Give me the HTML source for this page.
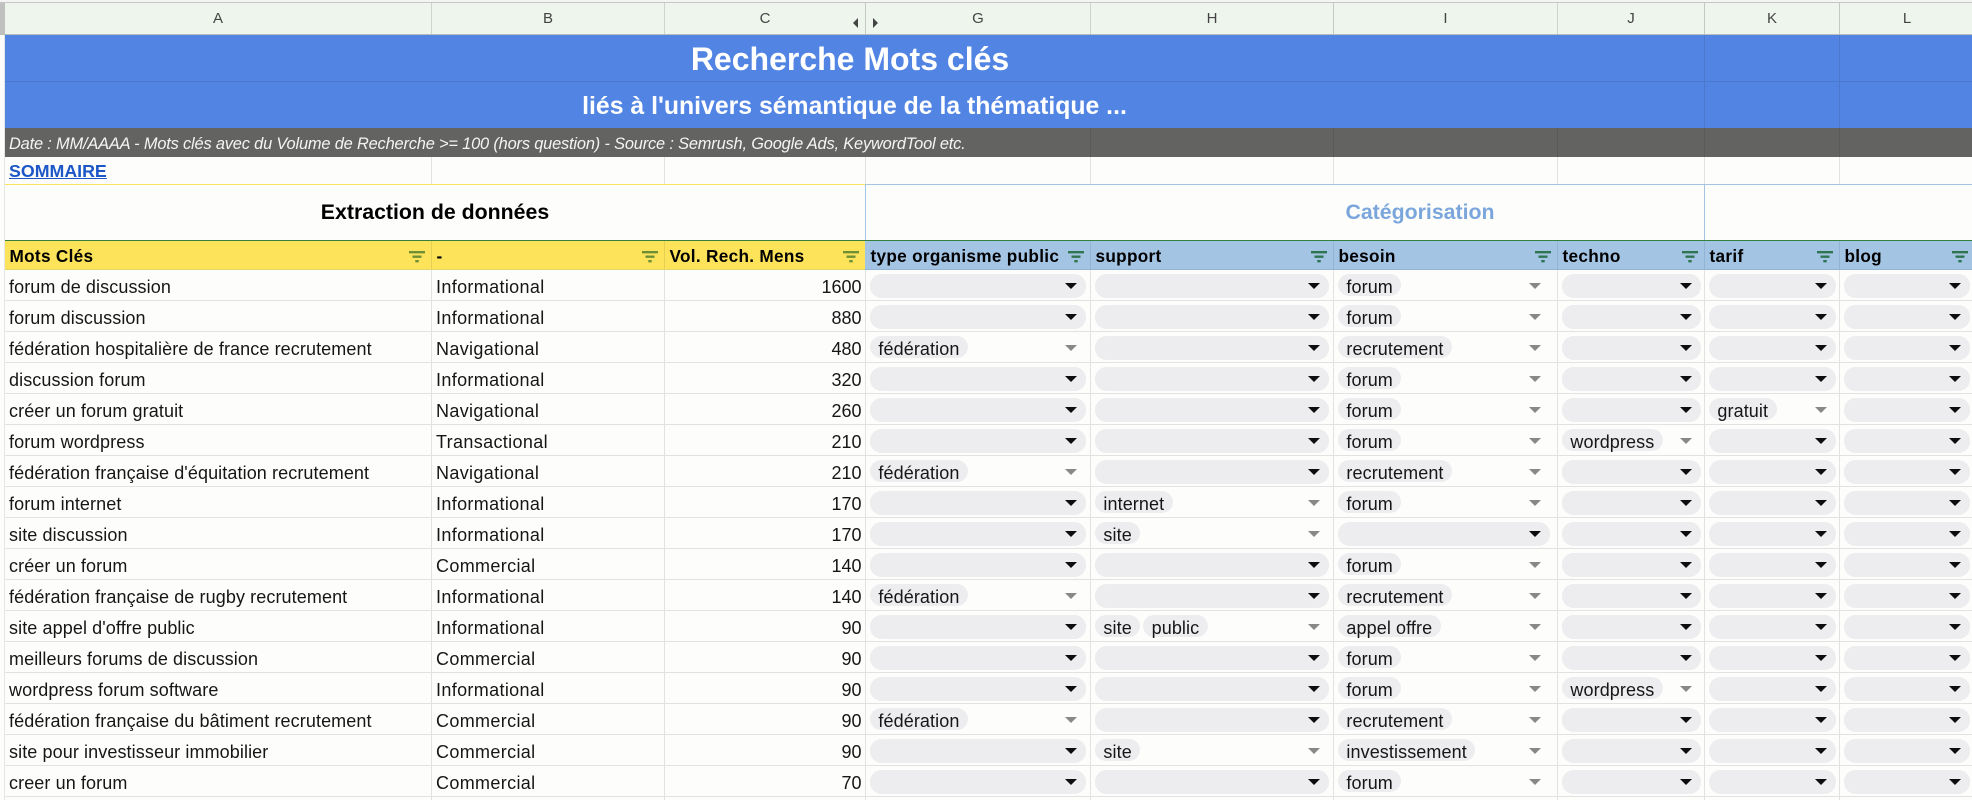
<!DOCTYPE html>
<html lang="fr"><head><meta charset="utf-8"><title>Recherche Mots clés</title>
<style>
html,body{margin:0;padding:0;background:#fdfefc}
#s{position:relative;width:1972px;height:800px;overflow:hidden;background:#fdfefc;font-family:"Liberation Sans",Arial,sans-serif;color:#111}
#s>div{position:absolute}
.v{width:1px}
.ch{top:3px;height:31px;line-height:31px;text-align:center;font-size:15px;color:#444;background:#edf5ed}
.bar{left:5px;width:1967px}
.ctr{white-space:nowrap;font-weight:bold;text-align:center;transform:translateX(-50%)}
.hd{top:241px;height:28px;line-height:30px;font-weight:bold;font-size:17.2px;letter-spacing:.3px;padding-left:4.5px;box-sizing:border-box;color:#000;white-space:nowrap}
.y{background:#fce35a}.bl{background:#a4c4e4}
.f{position:absolute;top:250.5px;width:16px;height:12px}
.r{left:5px;width:1967px;height:31px;border-bottom:1px solid #e2e2e2;box-sizing:border-box;font-size:18px;letter-spacing:.1px;color:#161616}
.r>*{position:absolute}
.r>b{font-weight:normal;top:1px;line-height:32px;white-space:nowrap}
.r>.a{left:4px}.r>.b{left:431px;letter-spacing:.35px}.r>.c{right:1110.5px;letter-spacing:0}
.d{top:4px;height:23.5px;border-radius:11.5px;display:block}
.e{background:#edecef}
.d::after{content:"";position:absolute;right:9px;top:8.5px;border-left:6px solid transparent;border-right:6px solid transparent;border-top:6.5px solid #888}
.e::after{border-top-color:#0d0d0d}
.d u{text-decoration:none;display:inline-block;height:22px;line-height:26px;border-radius:11px;background:#edecef;padding:0 8.4px;margin-right:3px;color:#161616;vertical-align:top}
.g{left:865px;width:216px}.h{left:1090px;width:234px}.i{left:1333px;width:212px}.j{left:1557px;width:138.5px}.k{left:1704px;width:127px}.l{left:1839px;width:126px}
</style></head><body><div id="s">
<div style="left:0;top:0;width:1972px;height:2px;background:#f4f4f4"></div>
<div style="left:0;top:2px;width:1972px;height:1px;background:#c6c6c6"></div>
<div style="left:0;top:3px;width:5px;height:32px;background:#c0c0c0"></div>
<div class="ch" style="left:5px;width:426px">A</div>
<div class="ch" style="left:432px;width:232px">B</div>
<div class="ch" style="left:665px;width:200px">C</div>
<div class="ch" style="left:866px;width:224px">G</div>
<div class="ch" style="left:1091px;width:242px">H</div>
<div class="ch" style="left:1334px;width:223px">I</div>
<div class="ch" style="left:1558px;width:146px">J</div>
<div class="ch" style="left:1705px;width:134px">K</div>
<div class="ch" style="left:1840px;width:134px">L</div>
<div class="v" style="left:431px;top:3px;height:31px;background:#ccd4cc"></div>
<div class="v" style="left:664px;top:3px;height:31px;background:#ccd4cc"></div>
<div class="v" style="left:865px;top:3px;height:31px;background:#c4c8c4"></div>
<div class="v" style="left:1090px;top:3px;height:31px;background:#ccd4cc"></div>
<div class="v" style="left:1333px;top:3px;height:31px;background:#c4c8c4"></div>
<div class="v" style="left:1557px;top:3px;height:31px;background:#ccd4cc"></div>
<div class="v" style="left:1704px;top:3px;height:31px;background:#c4c8c4"></div>
<div class="v" style="left:1839px;top:3px;height:31px;background:#c4c8c4"></div>
<div style="left:853px;top:18px;border-right:5px solid #444;border-top:5px solid transparent;border-bottom:5px solid transparent"></div>
<div style="left:873px;top:18px;border-left:5px solid #444;border-top:5px solid transparent;border-bottom:5px solid transparent"></div>
<div style="left:0;top:34px;width:1972px;height:1px;background:#b9bdb9"></div>

<div class="bar" style="top:35px;height:93px;background:#5285e3"></div>
<div class="bar" style="top:81px;height:1px;background:#4a78cc"></div>
<div class="bar" style="top:128px;height:29px;background:#636461"></div>
<div class="v" style="left:1704px;top:35px;height:93px;background:#4a78cc"></div>
<div class="v" style="left:1839px;top:35px;height:93px;background:#4a78cc"></div>
<div class="ctr" style="left:850px;top:41px;line-height:37px;font-size:32px;color:#fff">Recherche Mots clés</div>
<div class="ctr" style="left:854.5px;top:88px;line-height:37px;font-size:24.8px;color:#fff">liés à l'univers sémantique de la thématique ...</div>
<div style="left:9px;top:130px;line-height:29px;font-size:16.4px;font-style:italic;color:#f4f4f4;white-space:nowrap;letter-spacing:-.176px">Date : MM/AAAA - Mots clés avec du Volume de Recherche &gt;= 100 (hors question) - Source : Semrush, Google Ads, KeywordTool etc.</div>
<div class="v" style="left:1090px;top:128px;height:29px;background:#5a5b58"></div>
<div class="v" style="left:1333px;top:128px;height:29px;background:#5a5b58"></div>
<div class="v" style="left:1557px;top:128px;height:29px;background:#5a5b58"></div>
<div class="v" style="left:1704px;top:128px;height:29px;background:#5a5b58"></div>
<div class="v" style="left:1839px;top:128px;height:29px;background:#5a5b58"></div>

<div style="left:9px;top:157.5px;line-height:27px;font-size:17.8px;font-weight:bold;color:#1c56c7;text-decoration:underline">SOMMAIRE</div>
<div class="v" style="left:431px;top:157px;height:27px;background:#e2e2e2"></div>
<div class="v" style="left:664px;top:157px;height:27px;background:#e2e2e2"></div>
<div class="v" style="left:865px;top:157px;height:27px;background:#e2e2e2"></div>
<div class="v" style="left:1090px;top:157px;height:27px;background:#e2e2e2"></div>
<div class="v" style="left:1333px;top:157px;height:27px;background:#e2e2e2"></div>
<div class="v" style="left:1557px;top:157px;height:27px;background:#e2e2e2"></div>
<div class="v" style="left:1704px;top:157px;height:27px;background:#e2e2e2"></div>
<div class="v" style="left:1839px;top:157px;height:27px;background:#e2e2e2"></div>
<div style="left:5px;top:184px;width:860px;height:1px;background:#fce35a"></div>
<div style="left:865px;top:184px;width:1107px;height:1px;background:#a4c4e4"></div>
<div class="ctr" style="left:435px;top:185px;line-height:55px;font-size:21.3px;color:#000">Extraction de données</div>
<div class="ctr" style="left:1420px;top:185px;line-height:55px;font-size:21.3px;color:#7ba6dc">Catégorisation</div>
<div class="v" style="left:865px;top:185px;height:55px;background:#a4c4e4"></div>
<div class="v" style="left:1704px;top:185px;height:55px;background:#a4c4e4"></div>
<div style="left:5px;top:240px;width:1967px;height:1px;background:#35803f"></div>

<div class="hd y" style="left:5px;width:426px">Mots Clés</div>
<div class="hd y" style="left:432px;width:232px">-</div>
<div class="hd y" style="left:665px;width:200px">Vol. Rech. Mens</div>
<div class="hd bl" style="left:866px;width:224px">type organisme public</div>
<div class="hd bl" style="left:1091px;width:242px">support</div>
<div class="hd bl" style="left:1334px;width:223px">besoin</div>
<div class="hd bl" style="left:1558px;width:146px">techno</div>
<div class="hd bl" style="left:1705px;width:134px">tarif</div>
<div class="hd bl" style="left:1840px;width:132px">blog</div>
<div class="v" style="left:431px;top:241px;height:28px;background:#e6cf55"></div>
<div class="v" style="left:664px;top:241px;height:28px;background:#e6cf55"></div>
<div class="v" style="left:865px;top:241px;height:28px;background:#a4c4e4"></div>
<div class="v" style="left:1090px;top:241px;height:28px;background:#93b3d6"></div>
<div class="v" style="left:1333px;top:241px;height:28px;background:#93b3d6"></div>
<div class="v" style="left:1557px;top:241px;height:28px;background:#93b3d6"></div>
<div class="v" style="left:1704px;top:241px;height:28px;background:#93b3d6"></div>
<div class="v" style="left:1839px;top:241px;height:28px;background:#93b3d6"></div>
<div style="left:5px;top:269px;width:860px;height:1px;background:#e5d767"></div>
<div style="left:865px;top:269px;width:1107px;height:1px;background:#93b3d6"></div>

<svg class="f" style="left:409px" viewBox="0 0 16 12"><path fill="#6f8f35" d="M0 0h16v2.4H0zM3.5 4.5h9v2.4h-9zM6.3 9h3.4v2.4H6.3z"/></svg>
<svg class="f" style="left:642px" viewBox="0 0 16 12"><path fill="#6f8f35" d="M0 0h16v2.4H0zM3.5 4.5h9v2.4h-9zM6.3 9h3.4v2.4H6.3z"/></svg>
<svg class="f" style="left:843px" viewBox="0 0 16 12"><path fill="#6f8f35" d="M0 0h16v2.4H0zM3.5 4.5h9v2.4h-9zM6.3 9h3.4v2.4H6.3z"/></svg>
<svg class="f" style="left:1068px" viewBox="0 0 16 12"><path fill="#2f7550" d="M0 0h16v2.4H0zM3.5 4.5h9v2.4h-9zM6.3 9h3.4v2.4H6.3z"/></svg>
<svg class="f" style="left:1311px" viewBox="0 0 16 12"><path fill="#2f7550" d="M0 0h16v2.4H0zM3.5 4.5h9v2.4h-9zM6.3 9h3.4v2.4H6.3z"/></svg>
<svg class="f" style="left:1535px" viewBox="0 0 16 12"><path fill="#2f7550" d="M0 0h16v2.4H0zM3.5 4.5h9v2.4h-9zM6.3 9h3.4v2.4H6.3z"/></svg>
<svg class="f" style="left:1682px" viewBox="0 0 16 12"><path fill="#2f7550" d="M0 0h16v2.4H0zM3.5 4.5h9v2.4h-9zM6.3 9h3.4v2.4H6.3z"/></svg>
<svg class="f" style="left:1817px" viewBox="0 0 16 12"><path fill="#2f7550" d="M0 0h16v2.4H0zM3.5 4.5h9v2.4h-9zM6.3 9h3.4v2.4H6.3z"/></svg>
<svg class="f" style="left:1952px" viewBox="0 0 16 12"><path fill="#2f7550" d="M0 0h16v2.4H0zM3.5 4.5h9v2.4h-9zM6.3 9h3.4v2.4H6.3z"/></svg>

<div class="v" style="left:4px;top:35px;height:765px;background:#e4e8e4"></div>
<div class="v" style="left:431px;top:270px;height:530px;background:#e2e2e2"></div>
<div class="v" style="left:664px;top:270px;height:530px;background:#e2e2e2"></div>
<div class="v" style="left:865px;top:270px;height:530px;background:#e2e2e2"></div>
<div class="v" style="left:1090px;top:270px;height:530px;background:#e2e2e2"></div>
<div class="v" style="left:1333px;top:270px;height:530px;background:#e2e2e2"></div>
<div class="v" style="left:1557px;top:270px;height:530px;background:#e2e2e2"></div>
<div class="v" style="left:1704px;top:270px;height:530px;background:#e2e2e2"></div>
<div class="v" style="left:1839px;top:270px;height:530px;background:#e2e2e2"></div>

<div class="r" style="top:270px"><b class="a">forum de discussion</b><b class="b">Informational</b><b class="c">1600</b><span class="d e g"></span><span class="d e h"></span><span class="d i"><u>forum</u></span><span class="d e j"></span><span class="d e k"></span><span class="d e l"></span></div>
<div class="r" style="top:301px"><b class="a">forum discussion</b><b class="b">Informational</b><b class="c">880</b><span class="d e g"></span><span class="d e h"></span><span class="d i"><u>forum</u></span><span class="d e j"></span><span class="d e k"></span><span class="d e l"></span></div>
<div class="r" style="top:332px"><b class="a">fédération hospitalière de france recrutement</b><b class="b">Navigational</b><b class="c">480</b><span class="d g"><u>fédération</u></span><span class="d e h"></span><span class="d i"><u>recrutement</u></span><span class="d e j"></span><span class="d e k"></span><span class="d e l"></span></div>
<div class="r" style="top:363px"><b class="a">discussion forum</b><b class="b">Informational</b><b class="c">320</b><span class="d e g"></span><span class="d e h"></span><span class="d i"><u>forum</u></span><span class="d e j"></span><span class="d e k"></span><span class="d e l"></span></div>
<div class="r" style="top:394px"><b class="a">créer un forum gratuit</b><b class="b">Navigational</b><b class="c">260</b><span class="d e g"></span><span class="d e h"></span><span class="d i"><u>forum</u></span><span class="d e j"></span><span class="d k"><u>gratuit</u></span><span class="d e l"></span></div>
<div class="r" style="top:425px"><b class="a">forum wordpress</b><b class="b">Transactional</b><b class="c">210</b><span class="d e g"></span><span class="d e h"></span><span class="d i"><u>forum</u></span><span class="d j"><u>wordpress</u></span><span class="d e k"></span><span class="d e l"></span></div>
<div class="r" style="top:456px"><b class="a">fédération française d'équitation recrutement</b><b class="b">Navigational</b><b class="c">210</b><span class="d g"><u>fédération</u></span><span class="d e h"></span><span class="d i"><u>recrutement</u></span><span class="d e j"></span><span class="d e k"></span><span class="d e l"></span></div>
<div class="r" style="top:487px"><b class="a">forum internet</b><b class="b">Informational</b><b class="c">170</b><span class="d e g"></span><span class="d h"><u>internet</u></span><span class="d i"><u>forum</u></span><span class="d e j"></span><span class="d e k"></span><span class="d e l"></span></div>
<div class="r" style="top:518px"><b class="a">site discussion</b><b class="b">Informational</b><b class="c">170</b><span class="d e g"></span><span class="d h"><u>site</u></span><span class="d e i"></span><span class="d e j"></span><span class="d e k"></span><span class="d e l"></span></div>
<div class="r" style="top:549px"><b class="a">créer un forum</b><b class="b">Commercial</b><b class="c">140</b><span class="d e g"></span><span class="d e h"></span><span class="d i"><u>forum</u></span><span class="d e j"></span><span class="d e k"></span><span class="d e l"></span></div>
<div class="r" style="top:580px"><b class="a">fédération française de rugby recrutement</b><b class="b">Informational</b><b class="c">140</b><span class="d g"><u>fédération</u></span><span class="d e h"></span><span class="d i"><u>recrutement</u></span><span class="d e j"></span><span class="d e k"></span><span class="d e l"></span></div>
<div class="r" style="top:611px"><b class="a">site appel d'offre public</b><b class="b">Informational</b><b class="c">90</b><span class="d e g"></span><span class="d h"><u>site</u><u>public</u></span><span class="d i"><u>appel offre</u></span><span class="d e j"></span><span class="d e k"></span><span class="d e l"></span></div>
<div class="r" style="top:642px"><b class="a">meilleurs forums de discussion</b><b class="b">Commercial</b><b class="c">90</b><span class="d e g"></span><span class="d e h"></span><span class="d i"><u>forum</u></span><span class="d e j"></span><span class="d e k"></span><span class="d e l"></span></div>
<div class="r" style="top:673px"><b class="a">wordpress forum software</b><b class="b">Informational</b><b class="c">90</b><span class="d e g"></span><span class="d e h"></span><span class="d i"><u>forum</u></span><span class="d j"><u>wordpress</u></span><span class="d e k"></span><span class="d e l"></span></div>
<div class="r" style="top:704px"><b class="a">fédération française du bâtiment recrutement</b><b class="b">Commercial</b><b class="c">90</b><span class="d g"><u>fédération</u></span><span class="d e h"></span><span class="d i"><u>recrutement</u></span><span class="d e j"></span><span class="d e k"></span><span class="d e l"></span></div>
<div class="r" style="top:735px"><b class="a">site pour investisseur immobilier</b><b class="b">Commercial</b><b class="c">90</b><span class="d e g"></span><span class="d h"><u>site</u></span><span class="d i"><u>investissement</u></span><span class="d e j"></span><span class="d e k"></span><span class="d e l"></span></div>
<div class="r" style="top:766px"><b class="a">creer un forum</b><b class="b">Commercial</b><b class="c">70</b><span class="d e g"></span><span class="d e h"></span><span class="d i"><u>forum</u></span><span class="d e j"></span><span class="d e k"></span><span class="d e l"></span></div>
</div></body></html>
